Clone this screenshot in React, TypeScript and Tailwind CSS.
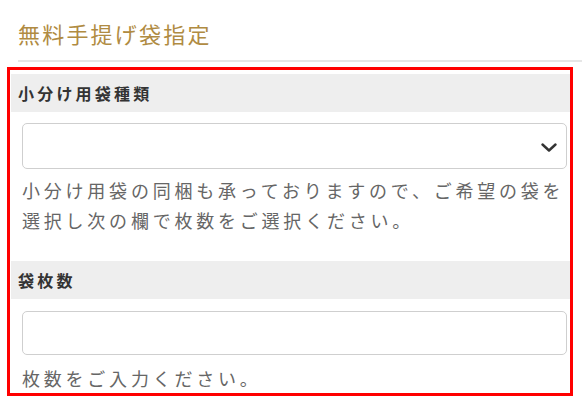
import React from "react";

const JP = { fontFamily: '"Noto Sans CJK JP", "Noto Sans", sans-serif' };

const SectionHead = ({ label }: { label: string }) => (
  <div className="flex h-[38px] items-center bg-[#eeeeee] pl-[7px] text-[16px] font-bold tracking-[0.2em] text-[#333333]">
    {label}
  </div>
);

export default function App() {
  return (
    <div className="h-[405px] w-[582px] overflow-hidden bg-white" style={JP}>
      <div className="ml-[18px] border-b-2 border-[#e6e6e6] pt-[17px] pb-[10px]">
        <h2 className="text-[22px] leading-[33px] font-normal tracking-[0.1em] text-[#b08b42]">
          無料手提げ袋指定
        </h2>
      </div>

      <div className="mt-[5px] ml-[7px] w-[566px] border-[3px] border-[#ff0000] pt-[4px] pl-[1px]">
        <SectionHead label="小分け用袋種類" />
        <div className="relative mt-[11px] ml-[11px] h-[46px] w-[545px] rounded-[5px] border border-[#cfcfcf] bg-white">
          <svg
            className="absolute top-[19px] right-[9px]"
            width="16"
            height="9"
            viewBox="0 0 16 9"
            fill="none"
          >
            <path d="M1.5 1.5 8 7.5l6.5-6" stroke="#333" strokeWidth="2.4" strokeLinecap="round" strokeLinejoin="round" />
          </svg>
        </div>
        <p className="mt-[6px] ml-[11px] text-[18px] leading-[30px] tracking-[0.21em] text-[#666666]">
          小分け用袋の同梱も承っておりますので、ご希望の袋を
          <br />
          選択し次の欄で枚数をご選択ください。
        </p>

        <div className="mt-[26px]">
          <SectionHead label="袋枚数" />
        </div>
        <div className="mt-[12px] ml-[11px] h-[44px] w-[545px] rounded-[5px] border border-[#cfcfcf] bg-white" />
        <p className="mt-[8px] ml-[11px] text-[18px] leading-[30px] tracking-[0.21em] text-[#666666]">
          枚数をご入力ください。
        </p>
      </div>
    </div>
  );
}
